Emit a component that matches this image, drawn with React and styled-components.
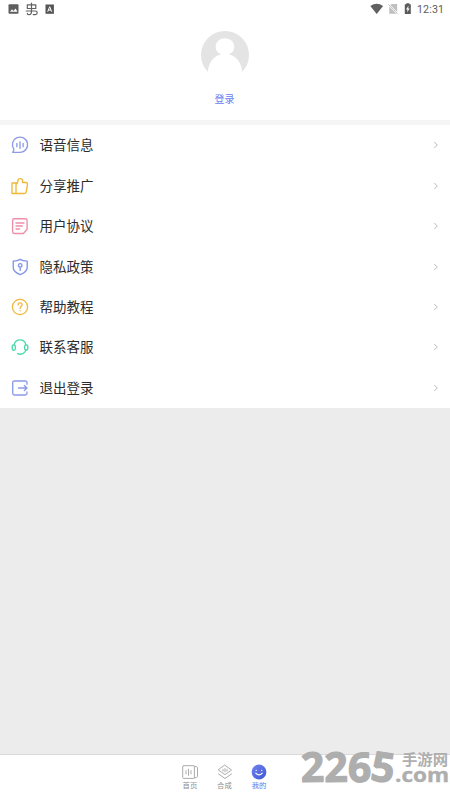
import React from "react";
import styled, { createGlobalStyle } from "styled-components";

const Global = createGlobalStyle`
  * { box-sizing: border-box; }
  body { margin: 0; background: #ececec; font-family: Roboto, "Noto Sans CJK SC", sans-serif; }
`;
const Screen = styled.div`
  width: 450px;
  height: 800px;
  display: flex;
  flex-direction: column;
  background: #ececec;
  position: relative;
  overflow: hidden;
`;
const StatusBar = styled.header`
  height: 20px;
  flex: none;
  display: flex;
  justify-content: space-between;
  background: #fff;
`;
const StatusIcons = styled.svg`
  display: block;
  height: 20px;
  width: ${(p) => p.$width}px;
`;
const StatusRight = styled.div`
  display: flex;
  width: 80px;
`;
const Clock = styled.span`
  font-size: 10.7px;
  line-height: 19px;
  letter-spacing: 0.1px;
  color: #5c5c5c;
  margin-left: 2px;
  white-space: nowrap;
`;
const Profile = styled.section`
  height: 105px;
  flex: none;
  background: #fff;
  border-bottom: 5px solid #f5f5f5;
  display: flex;
  flex-direction: column;
  align-items: center;
  padding: 11px 1px 0 0;
`;
const Avatar = styled.svg`
  width: 48px;
  height: 48px;
  flex: none;
`;
const Login = styled.div`
  margin-top: 13px;
  color: #6b81ee;
  font-size: 10px;
  line-height: 15px;
`;
const Menu = styled.main`
  height: 283px;
  flex: none;
  display: grid;
  grid-template-rows: repeat(7, 1fr);
  background: #fff;
`;
const MenuRow = styled.div`
  display: flex;
  align-items: center;
  padding: 0.2px 9px 0 10px;
`;
const RowIcon = styled.svg`
  width: 20px;
  height: 20px;
  flex: none;
  fill: none;
  stroke: ${(p) => p.$color};
  stroke-width: 1.35;
  stroke-linecap: round;
  stroke-linejoin: round;
`;
const RowLabel = styled.span`
  flex: 1;
  margin-left: 9.5px;
  font-size: 13.5px;
  line-height: 20px;
  color: #2c2c2c;
`;
const Chevron = styled.svg`
  width: 10px;
  height: 10px;
  fill: none;
  stroke: #bcbcbc;
  stroke-width: 1;
`;
const TabBar = styled.nav`
  height: 46px;
  margin-top: auto;
  flex: none;
  background: #fff;
  border-top: 1px solid #d9d9d9;
  display: flex;
  justify-content: center;
  padding-right: 1px;
`;
const Tab = styled.div`
  width: 34.6px;
  display: flex;
  flex-direction: column;
  align-items: center;
  padding-top: 8px;
  color: ${(p) => (p.$active ? "#5d78ec" : "#8f8f8f")};
  font-size: 7.4px;
  line-height: 10px;
`;
const TabIcon = styled.svg`
  width: 18px;
  height: 18px;
  fill: none;
  stroke: #ababab;
  stroke-width: 1;
  stroke-linejoin: round;
  stroke-linecap: round;
`;
const Watermark = styled.svg`
  position: absolute;
  right: 0;
  bottom: 0;
  width: 160px;
  height: 70px;
  fill: #aeaeae;
  stroke: #aeaeae;
  stroke-linejoin: round;
  font-family: "Open Sans", sans-serif;
  font-weight: 700;
`;
const WatermarkName = styled.text`
  font-family: "Noto Sans CJK SC", sans-serif;
  font-weight: 700;
`;

const items = [
  {
    label: "语音信息",
    color: "#8e9be7",
    icon: <><path d="M2.7 17.3H10a7.6 7.6 0 1 0-6.2-3.2q.1 1.8-1.1 3.2z" /><path d="M6.9 8.3v3.4M10 6.8v6.6M13.1 8.3v3.4" /></>,
  },
  {
    label: "分享推广",
    color: "#efb936",
    icon: <path d="M2 7h4v10.5H2zM6 8.2C7.8 7.4 7.8 6 8 4.4 8.3 1.8 12.6 2 12.6 5v1.5H16c1 0 1.6.7 1.5 1.6l-1.2 7.6c-.2 1.2-.8 1.8-1.8 1.8H6" />,
  },
  {
    label: "用户协议",
    color: "#f08eaa",
    icon: <path d="M4.2 2.7h11.2q1.7 0 1.7 1.7v8.8l-3.7 4.3H4.2q-1.6 0-1.6-1.7V4.4q0-1.7 1.6-1.7M6 7h8M6 10h6.3M6 13h3.5" />,
  },
  {
    label: "隐私政策",
    color: "#8294e5",
    icon: <><path d="M10.2 2.4c2 1.4 4.3 1.7 7 1.8v6.1c0 3.8-3.7 6.1-7 7.4-3.4-1.4-7-3.6-7-7.4V4.2c2.7-.1 5-.4 7-1.8z" /><circle cx="10.2" cy="8.4" r="1.8" /><path d="M10.2 10.4v3" /></>,
  },
  {
    label: "帮助教程",
    color: "#f0b83e",
    icon: <><circle cx="10" cy="10" r="7.6" /><path d="M8.1 7.9c.1-2.7 4-2.5 4-.1 0 1.7-2 1.7-2 3.6M10.1 13.6v.2" /></>,
  },
  {
    label: "联系客服",
    color: "#49d9aa",
    icon: <><path d="M4.1 8C4.6 4.7 6.9 2.8 10 2.8s5.4 1.9 5.9 5.2M16 12.9c-.8 2.6-3 4.3-6 4.3q-1.2 0-2.4-.5" /><rect x="2.2" y="7.8" width="3.2" height="5.4" rx="1.6" /><rect x="14.6" y="7.8" width="3.2" height="5.4" rx="1.6" /></>,
  },
  {
    label: "退出登录",
    color: "#8c9be8",
    icon: <path d="M17 6.2V4.8q0-1.8-1.8-1.8H4.5Q2.7 3 2.7 4.8v10.4Q2.7 17 4.5 17h10.7q1.8 0 1.8-1.8v-1.3M8.5 10H17M14.4 7.4 17 10l-2.6 2.6" />,
  },
];

export default function App() {
  return (
    <>
      <Global />
      <Screen>
        <StatusBar>
          <StatusIcons $width={70} viewBox="0 0 70 20">
            <rect x="8.5" y="4.3" width="10" height="9.4" rx="1" fill="#5e5e5e" />
            <path d="m10 11.8 2-2.6 1.5 1.8 2-2.5 2 3.3z" fill="#fff" />
            <g fill="none" stroke="#626262" strokeWidth="1.2" strokeLinecap="round" strokeLinejoin="round">
              <path d="M31.5 3v8M27.3 4.9h8.5v3.6h-8.5z" />
              <path d="M26.2 11h9.2q1.8 0 1.8 1.8t-1.8 1.8h-2.2M31.5 11q0 3.700-2.400 3.700-1.700 0-1.700-1.300" />
            </g>
            <rect x="45.5" y="4.5" width="8.4" height="9.3" fill="#555" />
            <path d="m47.7 11.7 2-5 2 5m-3.3-1.6h2.6" fill="none" stroke="#fff" />
          </StatusIcons>
          <StatusRight>
            <StatusIcons $width={45} viewBox="370 0 45 20">
              <path d="M370.3 6q6.4-4.7 12.8 0l-6.4 8z" fill="#606060" />
              <path d="M391.8 4h5.4v8l-7-7zM389.2 6.600l7.200 7.200h-7.200z" fill="#c0c0c0" />
              <path d="m388.3 4.3 9.300 9.600" stroke="#b2b2b2" strokeWidth=".8" />
              <path d="M404.8 4.3h1.5V3.2h3v1.1h1.5v9.8h-6z" fill="#595959" />
              <path d="m408.5 5.5-2.400 4h1.5l-.6 3 2.7-4h-1.5z" fill="#fff" />
            </StatusIcons>
            <Clock>12:31</Clock>
          </StatusRight>
        </StatusBar>
        <Profile>
          <Avatar viewBox="0 0 48 48">
            <circle cx="24" cy="24" r="24" fill="#e4e4e4" />
            <path d="M6.8 41C7.5 31.5 12.7 25 20 23.2c-3.3-1.4-5.3-3.4-5.3-7.1 0-5 3.8-8.8 9.3-8.8s9.3 3.8 9.3 8.8c0 3.7-2 5.7-5.3 7.1C35.3 25 40.5 31.5 41.2 41L39 49H9z" fill="#fff" />
          </Avatar>
          <Login>登录</Login>
        </Profile>
        <Menu>
          {items.map(({ label, color, icon }) => (
            <MenuRow key={label}>
              <RowIcon $color={color} viewBox="0 0 20 20">{icon}</RowIcon>
              <RowLabel>{label}</RowLabel>
              <Chevron viewBox="0 0 10 10"><path d="m3.3 2 3 3-3 3" /></Chevron>
            </MenuRow>
          ))}
        </Menu>
        <TabBar>
          <Tab>
            <TabIcon viewBox="0 0 18 18">
              <path d="M2.7 2.7h9.7q1 0 1 1v10.7q0 1-1 1H2.7q-1 0-1-1V3.7q0-1 1-1M13.3 3.2l2.3.6q.9.2.9 1v8.6q0 .8-.9 1l-2.3.6M5 7.7v3.2M7.5 6.2v6.2M10 7.7v3.2" />
            </TabIcon>
            首页
          </Tab>
          <Tab>
            <TabIcon viewBox="0 0 18 18">
              <path d="M9 2.3 15.5 7 9 11.7 2.5 7zM2.5 10.9 9 15.5l6.5-4.6M7 6.3v1.8M9 5.6v3.2M11 6.3v1.8" />
            </TabIcon>
            合成
          </Tab>
          <Tab $active>
            <TabIcon viewBox="0 0 18 18">
              <defs><linearGradient id="smile" x2="1" y2="1"><stop stopColor="#7484ee" /><stop offset="1" stopColor="#3d56d5" /></linearGradient></defs>
              <circle cx="9" cy="9" r="7.4" fill="url(#smile)" stroke="none" />
              <path d="M6.2 7.3v.1M11.8 7.3v.1M5.8 10.2q3.2 3.4 6.4 0" stroke="#fff" strokeWidth="1.2" />
            </TabIcon>
            我的
          </Tab>
        </TabBar>
        <Watermark viewBox="0 -10 160 70">
          <text x="11 34.500 57.500 79.500" y="42 42 41.500 40" rotate="-1 -1 2 8" fontSize="41" strokeWidth="1.2">2265</text>
          <text x="105" y="42" fontSize="19" strokeWidth=".4" textLength="54" lengthAdjust="spacingAndGlyphs">.com</text>
          <WatermarkName x="112" y="25" fontSize="14.5" strokeWidth="0" textLength="46" lengthAdjust="spacingAndGlyphs">手游网</WatermarkName>
        </Watermark>
      </Screen>
    </>
  );
}
